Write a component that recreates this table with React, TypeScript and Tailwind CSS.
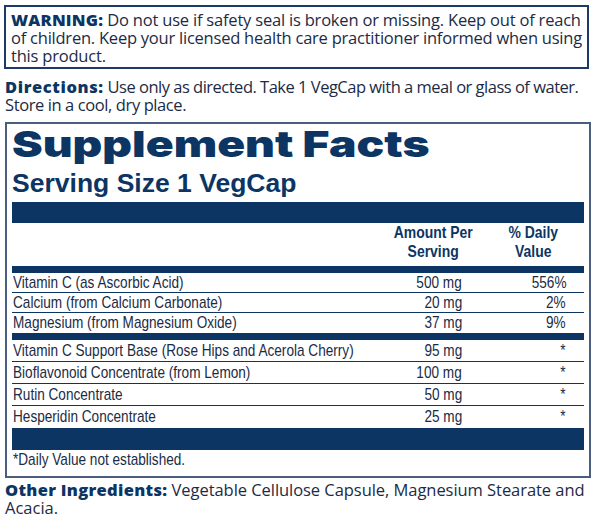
import React from "react";

const NAVY = "#0c3563";

const rowsA = [
  ["Vitamin C (as Ascorbic Acid)", "500 mg", "556%"],
  ["Calcium (from Calcium Carbonate)", "20 mg", "2%"],
  ["Magnesium (from Magnesium Oxide)", "37 mg", "9%"],
];
const rowsB = [
  ["Vitamin C Support Base (Rose Hips and Acerola Cherry)", "95 mg", "*"],
  ["Bioflavonoid Concentrate (from Lemon)", "100 mg", "*"],
  ["Rutin Concentrate", "50 mg", "*"],
  ["Hesperidin Concentrate", "25 mg", "*"],
];

function NL({ children }: { children: React.ReactNode }) {
  return <span className="inline-block whitespace-nowrap scale-x-[0.8] origin-left">{children}</span>;
}
function NR({ children }: { children: React.ReactNode }) {
  return <span className="inline-block whitespace-nowrap scale-x-[0.8] origin-right">{children}</span>;
}

function Row({ r, h, border }: { r: string[]; h: string; border: boolean }) {
  return (
    <div className={`flex items-center ${h} ${border ? "border-b border-[#0c3563]" : ""}`}>
      <div className="flex-1 min-w-0 pl-[1px]">
        <NL>{r[0]}</NL>
      </div>
      <div className="w-[80px] text-right">
        <NR>{r[1]}</NR>
      </div>
      <div className="w-[122px] text-right pr-[18px]">
        <NR>{r[2]}</NR>
      </div>
    </div>
  );
}

export default function App() {
  const myriad = { fontFamily: '"Open Sans", "Noto Sans", sans-serif' };
  const arial = { fontFamily: '"Liberation Sans", Arial, sans-serif' };
  return (
    <div className="w-[596px] h-[519px] bg-white overflow-hidden text-[#1b2b45]">
      {/* Warning */}
      <div
        className="mt-[5px] ml-[4px] w-[585px] border-2 border-[#1d3a66] pl-[5px] pt-[4px] pb-[2px] text-[16.5px] leading-[18px] whitespace-nowrap"
        style={myriad}
      >
        <span className="font-extrabold text-[#0c3563] tracking-[0.2px]">WARNING:</span>
        <span className="tracking-[-0.2px]"> Do not use if safety seal is broken or missing. Keep out of reach</span>
        <br />
        <span className="tracking-[-0.23px]">of children. Keep your licensed health care practitioner informed when using</span>
        <br />
        <span className="tracking-[-0.2px]">this product.</span>
      </div>

      {/* Directions */}
      <div className="mt-[9px] ml-[5px] text-[16.5px] leading-[18px] whitespace-nowrap" style={myriad}>
        <span className="font-extrabold text-[#0c3563] tracking-[0.6px]">Directions:</span>
        <span className="tracking-[-0.5px]"> Use only as directed. Take 1 VegCap with a meal or glass of water.</span>
        <br />
        <span className="tracking-[-0.4px]">Store in a cool, dry place.</span>
      </div>

      {/* Supplement Facts box */}
      <div className="mt-[8px] ml-[5px] w-[586px] h-[356px] border-2 border-[#4a5f80] px-[5px]">
        <div
          className="mt-[2px] h-[36px] text-[36px] leading-[36px] font-black text-[#0c3563] whitespace-nowrap"
          style={{ fontFamily: "Inter, sans-serif" }}
        >
          <span className="inline-block scale-x-[1.28] origin-left">Supplement Facts</span>
        </div>
        <div
          className="mt-[7px] h-[28px] text-[26px] leading-[28px] font-bold text-[#0c3563] whitespace-nowrap"
          style={arial}
        >
          <span className="inline-block scale-x-[1.02] origin-left">Serving Size 1 VegCap</span>
        </div>
        <div className="mt-[5px] h-[21px]" style={{ background: NAVY }} />
        <div className="flex h-[43px] text-[17px] leading-[19px] font-bold text-[#0c3563]" style={arial}>
          <div className="flex-1" />
          <div className="w-[110px] text-center">
            <span className="inline-block whitespace-nowrap scale-x-[0.82] origin-center">Amount Per</span>
            <br />
            <span className="inline-block whitespace-nowrap scale-x-[0.82] origin-center">Serving</span>
          </div>
          <div className="w-[90px] text-center mr-[6px]">
            <span className="inline-block whitespace-nowrap scale-x-[0.82] origin-center">% Daily</span>
            <br />
            <span className="inline-block whitespace-nowrap scale-x-[0.82] origin-center">Value</span>
          </div>
        </div>
        <div className="h-[7px]" style={{ background: NAVY }} />
        <div className="text-[17px] leading-[18px]" style={arial}>
          <Row r={rowsA[0]} h="h-[20px]" border />
          <Row r={rowsA[1]} h="h-[20px]" border />
          <Row r={rowsA[2]} h="h-[20px]" border={false} />
          <div className="h-[7px]" style={{ background: NAVY }} />
          <Row r={rowsB[0]} h="h-[22px]" border />
          <Row r={rowsB[1]} h="h-[22px]" border />
          <Row r={rowsB[2]} h="h-[22px]" border />
          <Row r={rowsB[3]} h="h-[22px]" border={false} />
          <div className="h-[22px]" style={{ background: NAVY }} />
          <div className="h-[20px] flex items-center pl-[1px]">
            <NL>*Daily Value not established.</NL>
          </div>
        </div>
      </div>

      {/* Other ingredients */}
      <div className="mt-[3px] ml-[5px] text-[16.5px] leading-[18px] whitespace-nowrap" style={myriad}>
        <span className="font-extrabold text-[#0c3563] tracking-[0.3px]">Other Ingredients:</span>
        <span className="tracking-[-0.05px]"> Vegetable Cellulose Capsule, Magnesium Stearate and</span>
        <br />
        Acacia.
      </div>
    </div>
  );
}
